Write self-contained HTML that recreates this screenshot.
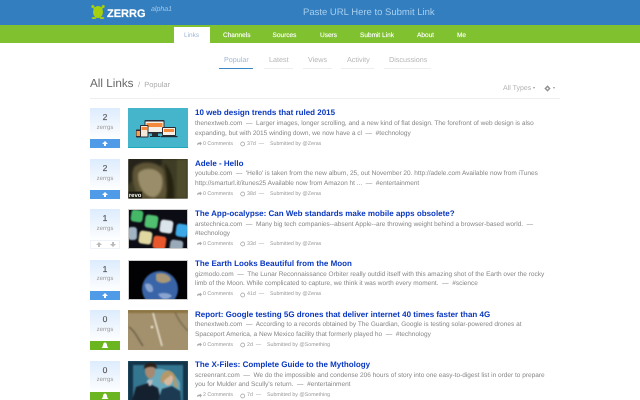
<!DOCTYPE html>
<html><head><meta charset="utf-8"><style>
html,body{margin:0;padding:0;width:640px;height:400px;overflow:hidden;background:#fff}
body{font-family:"Liberation Sans",sans-serif;position:relative;text-rendering:geometricPrecision}
#w{position:absolute;left:0;top:0;width:640px;height:400px;filter:blur(.25px)}
.a{position:absolute;white-space:nowrap}
.n{top:30.500px;font-size:6.500px;line-height:9px;color:#fff;-webkit-text-stroke:.15px #fff}
.s{top:55px;font-size:7.200px;line-height:9px;color:#b5b5b5}
.u{top:67.500px;height:1.500px;background:#eee}
.t{font-size:8px;line-height:11px;font-weight:bold;color:#0a38c0;left:195px}
.d{font-size:6.500px;line-height:9px;color:#858585;left:195px}
.m{font-size:5.300px;line-height:8px;color:#999}
.v{left:90px;width:30px;height:40px;background:linear-gradient(#ddecfd,#fff 80%)}
.v b{position:absolute;top:4px;left:0;width:30px;text-align:center;font-size:8.500px;line-height:10px;color:#5a5a5a;font-weight:normal;-webkit-text-stroke:.2px #5a5a5a}
.v i{position:absolute;top:15.500px;left:0;width:30px;text-align:center;font-size:6px;line-height:8px;color:#999;font-style:normal}
.b{position:absolute;left:0;top:31px;width:30px;height:9px}
.b svg{position:absolute;left:0;top:0}
.th{left:128px;width:60px;height:40px;overflow:hidden}
.g{filter:blur(.7px)}
.h{filter:blur(1.200px)}
</style></head><body><div id="w">
<div class="a" style="left:0;top:0;width:640px;height:25px;background:#337ebf"></div>
<div class="a" style="left:0;top:25px;width:640px;height:18px;background:#7fc12f"></div>
<div class="a" style="left:174px;top:27px;width:36px;height:16px;background:#fff"></div>
<svg class="a" style="left:90px;top:4px" width="16" height="16" viewBox="0 0 16 16"><g fill="#a6d00e"><ellipse cx="8" cy="8" rx="5" ry="6"/><circle cx="2.800" cy="2.500" r="1.500"/><circle cx="13.200" cy="2.500" r="1.500"/><path d="M2.800 2l3 2-2 2zM13.200 2l-3 2 2 2z"/><ellipse cx="4" cy="14" rx="2.300" ry="1"/><ellipse cx="12" cy="14" rx="2.300" ry="1"/></g></svg>
<div class="a" style="left:107px;top:7px;font-size:11px;line-height:14px;font-weight:bold;color:#fff;-webkit-text-stroke:.2px #fff">ZERRG</div>
<div class="a" style="left:151px;top:5px;font-size:7px;line-height:9px;font-style:italic;color:#a8cbe8">alpha1</div>
<div class="a" style="left:303px;top:7px;font-size:9.500px;line-height:12px;color:#a7cfef">Paste URL Here to Submit Link</div>

<div class="a n" style="left:184px;color:#9db7d6;-webkit-text-stroke:0">Links</div>
<div class="a n" style="left:223px">Channels</div>
<div class="a n" style="left:272.500px">Sources</div>
<div class="a n" style="left:320px">Users</div>
<div class="a n" style="left:360px">Submit Link</div>
<div class="a n" style="left:417px">About</div>
<div class="a n" style="left:457px">Me</div>

<div class="a s" style="left:224px;color:#a0b8d8">Popular</div><div class="a u" style="left:219px;width:34px;background:#3a87c7"></div>
<div class="a s" style="left:269px">Latest</div><div class="a u" style="left:264px;width:29px"></div>
<div class="a s" style="left:308px">Views</div><div class="a u" style="left:303px;width:29px"></div>
<div class="a s" style="left:347px">Activity</div><div class="a u" style="left:341px;width:33px"></div>
<div class="a s" style="left:389px">Discussions</div><div class="a u" style="left:384px;width:47px"></div>

<div class="a" style="left:90px;top:75px;font-size:11.700px;line-height:17px;color:#666">All Links</div>
<div class="a" style="left:138px;top:80px;font-size:7.500px;line-height:10px;color:#aaa">/&nbsp; Popular</div>
<div class="a" style="left:503px;top:84px;font-size:7px;line-height:9px;color:#b0b0b0">All Types</div>
<div class="a" style="left:533px;top:87px;width:0;height:0;border:1.500px solid transparent;border-top:2px solid #999;border-bottom:0"></div>
<svg class="a" style="left:544px;top:85px" width="7" height="7" viewBox="0 0 7 7"><circle cx="3.500" cy="3.500" r="1.700" fill="none" stroke="#888" stroke-width="1.300"/><path d="M3.500 .5v1M3.500 5.500v1M.5 3.500h1M5.500 3.500h1" stroke="#888" stroke-width=".8"/></svg>
<div class="a" style="left:553px;top:87px;width:0;height:0;border:1.500px solid transparent;border-top:2px solid #999;border-bottom:0"></div>
<div class="a" style="left:90px;top:98px;width:470px;height:1px;background:#eee"></div>

<!-- Row 1 -->
<div class="a v" style="top:108px"><b>2</b><i>zerrgs</i><div class="b" style="background:#4f9be8"><svg width="30" height="9"><path d="M15 2l3 3h-2v2h-2v-2h-2z" fill="#fff"/></svg></div></div>
<svg class="a th" style="top:108px" viewBox="0 0 60 40"><rect width="60" height="40" fill="#45b5cc"/><rect y="39" width="60" height="1" fill="#1ea9be"/><rect x="16.500" y="12" width="20" height="13.500" rx="1" fill="#2b2b33"/><rect x="17.500" y="13.500" width="18" height="10.500" fill="#f5f0e8"/><rect x="18.500" y="15" width="16" height="4" fill="#f58a3c"/><rect x="24" y="25" width="6" height="3" fill="#2b2b33"/><rect x="22" y="28" width="10" height="1" fill="#1e2a33"/><rect x="34" y="19" width="14" height="9" rx="1" fill="#2b2b33"/><rect x="35" y="20" width="12" height="7" fill="#f5f0e8"/><rect x="36" y="21" width="10" height="3" fill="#f58a3c"/><rect x="32.500" y="28" width="17" height="1.200" fill="#1e2a33"/><rect x="12" y="17" width="8.500" height="12.500" rx="1" fill="#2b2b33"/><rect x="13" y="18" width="6.500" height="10.500" fill="#f5e8d8"/><rect x="13.500" y="19" width="5.500" height="3" fill="#f58a3c"/><rect x="8" y="21.500" width="4.500" height="8" rx=".7" fill="#2b2b33"/><rect x="8.500" y="23" width="3.500" height="5" fill="#f5a050"/></svg>
<div class="a t" style="top:107px">10 web design trends that ruled 2015</div>
<div class="a d" style="top:118.500px">thenextweb.com &nbsp;—&nbsp; Larger images, longer scrolling, and a new kind of flat design. The forefront of web design is also</div>
<div class="a d" style="top:128.500px">expanding, but with 2015 winding down, we now have a cl &nbsp;—&nbsp; #technology</div>
<svg class="a" style="left:196px;top:141px" width="50" height="6" viewBox="0 0 50 6"><path d="M1 4c0-2 1-2.500 3-2.500V.5l2 2-2 2V3.300C3 3.300 2 3.500 1 4z" fill="#aaa"/><circle cx="46.700" cy="3" r="2" fill="none" stroke="#999" stroke-width=".7"/></svg>
<div class="a m" style="left:203px;top:139.500px">0 Comments</div><div class="a m" style="left:247px;top:139.500px">37d &nbsp;—</div><div class="a m" style="left:270px;top:139.500px">Submitted by @Zeras</div>

<!-- Row 2 -->
<div class="a v" style="top:159px"><b>2</b><i>zerrgs</i><div class="b" style="background:#4f9be8"><svg width="30" height="9"><path d="M15 2l3 3h-2v2h-2v-2h-2z" fill="#fff"/></svg></div></div>
<svg class="a th" style="top:159px;height:39.500px" viewBox="0 0 60 40"><rect width="60" height="40" fill="#2a2a16"/><g class="h"><path d="M0 0h60v40H0z" fill="#3e3c24"/><path d="M0 0h34v6L12 14 0 26z" fill="#26241a"/><path d="M6 8c8-7 24-6 30 4l4 28H12C4 28 2 16 6 8z" fill="#5e5436"/><path d="M10 14c6-6 20-6 24 4 2 9-1 18-8 21-9 0-18-12-16-25z" fill="#9a8e6a"/><path d="M36 4c7 6 11 18 10 36h-8c2-12 2-24-2-36z" fill="#24220f"/><path d="M49 0h11v40H49z" fill="#4e4c2c"/></g><rect x="0" y="33" width="14" height="7" fill="#1a1a10"/><text x=".5" y="38.500" font-size="6" font-weight="bold" fill="#fff" font-family="Liberation Sans">revo</text></svg>
<div class="a t" style="top:157.500px">Adele - Hello</div>
<div class="a d" style="top:168.500px">youtube.com &nbsp;—&nbsp; 'Hello' is taken from the new album, 25, out November 20. http://adele.com Available now from iTunes</div>
<div class="a d" style="top:178.500px">http://smarturl.it/itunes25 Available now from Amazon ht ... &nbsp;—&nbsp; #entertainment</div>
<svg class="a" style="left:196px;top:191px" width="50" height="6" viewBox="0 0 50 6"><path d="M1 4c0-2 1-2.500 3-2.500V.5l2 2-2 2V3.300C3 3.300 2 3.500 1 4z" fill="#aaa"/><circle cx="46.700" cy="3" r="2" fill="none" stroke="#999" stroke-width=".7"/></svg>
<div class="a m" style="left:203px;top:190px">0 Comments</div><div class="a m" style="left:247px;top:190px">38d &nbsp;—</div><div class="a m" style="left:270px;top:190px">Submitted by @Zeras</div>

<!-- Row 3 -->
<div class="a v" style="top:209px"><b>1</b><i>zerrgs</i><div class="b" style="background:#fff;border:1px solid #eef3f9;box-sizing:border-box"><svg width="28" height="7"><path d="M8 1l3 3h-2v2h-2v-2h-2zM22 6l3-3h-2v-2h-2v2h-2z" fill="#bbb"/></svg></div></div>
<svg class="a th" style="top:209px;outline:1px solid #ccc;outline-offset:-1px" viewBox="0 0 60 40"><rect width="60" height="40" fill="#0c0c14"/><g class="g"><rect x="3" y="1" width="12" height="12" rx="3" fill="#45b868" transform="rotate(8 9 7)"/><rect x="17" y="6" width="13" height="13" rx="3" fill="#50c070" transform="rotate(8 23 12)"/><rect x="32" y="11" width="13" height="13" rx="3" fill="#dbe4ea" transform="rotate(8 38 17)"/><rect x="48" y="15" width="12" height="13" rx="3" fill="#3ca8e8" transform="rotate(8 54 21)"/><rect x="0" y="18" width="9" height="13" rx="3" fill="#a0b4c4"/><rect x="11" y="22" width="13" height="13" rx="3" fill="#e0d8a0" transform="rotate(8 17 28)"/><rect x="25" y="27" width="13" height="13" rx="3" fill="#e8582c" transform="rotate(8 31 33)"/><rect x="42" y="31" width="13" height="12" rx="3" fill="#9aaab8" transform="rotate(8 48 36)"/></g></svg>
<div class="a t" style="top:208px">The App-ocalypse: Can Web standards make mobile apps obsolete?</div>
<div class="a d" style="top:219.500px">arstechnica.com &nbsp;—&nbsp; Many big tech companies--absent Apple--are throwing weight behind a browser-based world. &nbsp;—</div>
<div class="a d" style="top:228.500px">#technology</div>
<svg class="a" style="left:196px;top:241px" width="50" height="6" viewBox="0 0 50 6"><path d="M1 4c0-2 1-2.500 3-2.500V.5l2 2-2 2V3.300C3 3.300 2 3.500 1 4z" fill="#aaa"/><circle cx="46.700" cy="3" r="2" fill="none" stroke="#999" stroke-width=".7"/></svg>
<div class="a m" style="left:203px;top:239.500px">0 Comments</div><div class="a m" style="left:247px;top:239.500px">33d &nbsp;—</div><div class="a m" style="left:270px;top:239.500px">Submitted by @Zeras</div>

<!-- Row 4 -->
<div class="a v" style="top:259.500px"><b>1</b><i>zerrgs</i><div class="b" style="background:#4f9be8"><svg width="30" height="9"><path d="M15 2l3 3h-2v2h-2v-2h-2z" fill="#fff"/></svg></div></div>
<svg class="a th" style="top:259.500px;outline:1px solid #ccc;outline-offset:-1px" viewBox="0 0 60 40"><rect width="60" height="40" fill="#020204"/><g class="g"><circle cx="32" cy="29" r="18" fill="#3a64a8"/><path d="M28 14c6-2 14 0 15 6-4 4-12 4-15 0z" fill="#a89878"/><path d="M17 24c5-2 9 2 8 7-3 3-8 0-8-7zM30 34c5-2 12-1 14 2-4 4-10 5-14-2z" fill="#8aa4d0"/></g></svg>
<div class="a t" style="top:258px">The Earth Looks Beautiful from the Moon</div>
<div class="a d" style="top:269.500px">gizmodo.com &nbsp;—&nbsp; The Lunar Reconnaissance Orbiter really outdid itself with this amazing shot of the Earth over the rocky</div>
<div class="a d" style="top:279px">limb of the Moon. While complicated to capture, we think it was worth every moment. &nbsp;—&nbsp; #science</div>
<svg class="a" style="left:196px;top:291.500px" width="50" height="6" viewBox="0 0 50 6"><path d="M1 4c0-2 1-2.500 3-2.500V.5l2 2-2 2V3.300C3 3.300 2 3.500 1 4z" fill="#aaa"/><circle cx="46.700" cy="3" r="2" fill="none" stroke="#999" stroke-width=".7"/></svg>
<div class="a m" style="left:203px;top:290px">0 Comments</div><div class="a m" style="left:247px;top:290px">41d &nbsp;—</div><div class="a m" style="left:270px;top:290px">Submitted by @Zeras</div>

<!-- Row 5 -->
<div class="a v" style="top:310px"><b>0</b><i>zerrgs</i><div class="b" style="background:#6ab520"><svg width="30" height="9"><path d="M15 1.500c2 0 2 3 2.500 4.500l1 1h-7l1-1c.5-1.500.5-4.500 2.500-4.500z" fill="#fff"/></svg></div></div>
<svg class="a th" style="top:310px" viewBox="0 0 60 40"><rect width="60" height="40" fill="#a3906c"/><g class="g"><path d="M0 0h60v3H0z" fill="#8c7440"/><path d="M1 17c6 4 9 12 14 19" stroke="#6e624a" stroke-width="1.500" fill="none"/><path d="M47 2c3 8 8 14 13 19" stroke="#7a6e52" stroke-width="1.500" fill="none"/><path d="M25 3l9 33" stroke="#e0d8c4" stroke-width="1.800"/><circle cx="24" cy="17" r="1.300" fill="#eee8d8"/></g></svg>
<div class="a t" style="top:308.500px">Report: Google testing 5G drones that deliver internet 40 times faster than 4G</div>
<div class="a d" style="top:320px">thenextweb.com &nbsp;—&nbsp; According to a records obtained by The Guardian, Google is testing solar-powered drones at</div>
<div class="a d" style="top:329.500px">Spaceport America, a New Mexico facility that formerly played ho &nbsp;—&nbsp; #technology</div>
<svg class="a" style="left:196px;top:342px" width="50" height="6" viewBox="0 0 50 6"><path d="M1 4c0-2 1-2.500 3-2.500V.5l2 2-2 2V3.300C3 3.300 2 3.500 1 4z" fill="#aaa"/><circle cx="46.700" cy="3" r="2" fill="none" stroke="#999" stroke-width=".7"/></svg>
<div class="a m" style="left:203px;top:341px">0 Comments</div><div class="a m" style="left:247px;top:341px">2d &nbsp;—</div><div class="a m" style="left:267px;top:341px">Submitted by @Something</div>

<!-- Row 6 -->
<div class="a v" style="top:360.500px"><b>0</b><i>zerrgs</i><div class="b" style="background:#6ab520"><svg width="30" height="9"><path d="M15 1.500c2 0 2 3 2.500 4.500l1 1h-7l1-1c.5-1.500.5-4.500 2.500-4.500z" fill="#fff"/></svg></div></div>
<svg class="a th" style="top:360.500px" viewBox="0 0 60 40"><rect width="60" height="40" fill="#34758f"/><g class="g"><path d="M0 0h60v4H0zM0 0h5v40H0zM55 0h5v40h-5z" fill="#143448"/><path d="M26 8c10-2 22 4 26 14v18H8z" fill="#6aa8bc"/><path d="M4 40l4-14 12-4 10 5 3 13z" fill="#14202e"/><ellipse cx="22" cy="10" rx="5" ry="7.500" fill="#a88870"/><path d="M16 8c-1-8 13-9 13 0-3-3-9-3-13 0z" fill="#2a2018"/><path d="M19 19h6l-2 6h-2z" fill="#b8bcc0"/><path d="M30 40l4-12 10-3 8 5 1 10z" fill="#1c3a52"/><ellipse cx="40" cy="17" rx="5" ry="7.500" fill="#d8b89c"/><path d="M33 22c-3-14 14-17 15-3l2 8-4-2c0-5 0-9-3-11-3 3-7 4-8 8z" fill="#b49868"/></g></svg>
<div class="a t" style="top:359px">The X-Files: Complete Guide to the Mythology</div>
<div class="a d" style="top:370.500px">screenrant.com &nbsp;—&nbsp; We do the impossible and condense 206 hours of story into one easy-to-digest list in order to prepare</div>
<div class="a d" style="top:380px">you for Mulder and Scully's return. &nbsp;—&nbsp; #entertainment</div>
<svg class="a" style="left:196px;top:392.500px" width="50" height="6" viewBox="0 0 50 6"><path d="M1 4c0-2 1-2.500 3-2.500V.5l2 2-2 2V3.300C3 3.300 2 3.500 1 4z" fill="#aaa"/><circle cx="46.700" cy="3" r="2" fill="none" stroke="#999" stroke-width=".7"/></svg>
<div class="a m" style="left:203px;top:391px">2 Comments</div><div class="a m" style="left:247px;top:391px">7d &nbsp;—</div><div class="a m" style="left:267px;top:391px">Submitted by @Something</div>
</div></body></html>
